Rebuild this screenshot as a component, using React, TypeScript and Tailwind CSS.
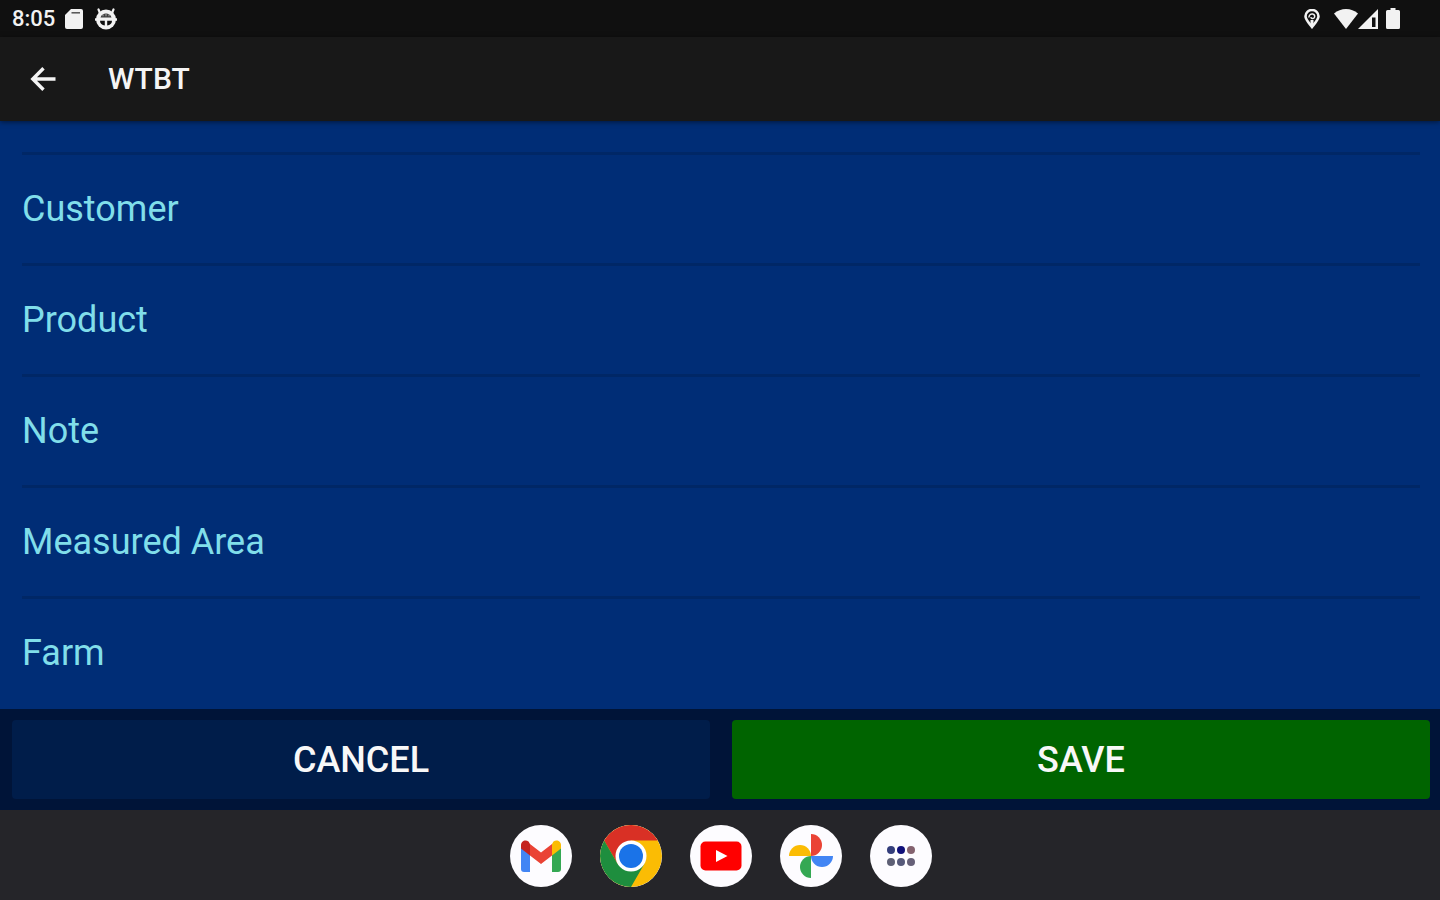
const FIELDS = ["Customer", "Product", "Note", "Measured Area", "Farm"];

function StatusBar() {
  return (
    <div className="flex h-[37px] shrink-0 items-center justify-between bg-[#101010] pr-10 pl-3 text-[#f2f2f2]">
      <div className="flex items-center gap-2.5">
        <span className="text-[22px] leading-9 font-medium">8:05</span>
        <svg viewBox="0 0 18 20" className="h-5 w-[18px]" fill="currentColor" aria-hidden="true">
          <path d="M6 0h10a2 2 0 0 1 2 2v16a2 2 0 0 1-2 2H2a2 2 0 0 1-2-2V6z" />
          <path d="M6.500 3.800h8.500" stroke="#101010" strokeWidth="1.500" opacity="0.700" />
        </svg>
        <svg viewBox="0 0 24 22" className="ml-px h-[22px] w-6" fill="currentColor" aria-hidden="true">
          <path d="M6 5 4.500 1.500M18 5l1.500-3.500" stroke="currentColor" strokeWidth="2.200" strokeLinecap="round" />
          <circle cx="12" cy="11.500" r="10" />
          <path d="M1 11.500h22" stroke="currentColor" strokeWidth="2.500" />
          <g fill="#101010">
            <path d="M6.500 9.500C7.500 6.500 9.500 5.500 12 5.500s4.500 1 5.500 4z" opacity="0.800" />
            <path d="M6 12.800h4.800v4.700C8 17.500 6 15.500 6 12.800zM13.200 12.800H18c0 2.700-2 4.700-4.800 4.700z" />
          </g>
          <path d="M9 6.500v1.800M12 6v2.300M15 6.500v1.800" stroke="currentColor" strokeWidth="1" opacity="0.600" />
        </svg>
      </div>
      <div className="flex items-center">
        <svg viewBox="0 0 16 20" className="mr-3.5 h-5 w-4" fill="none" stroke="currentColor" aria-hidden="true">
          <path d="M8 18C4.500 13.500 1.500 10.500 1.500 7.300a6.500 6.300 0 0 1 13 0c0 3.200-3 6.200-6.500 10.700z" strokeWidth="2.600" />
          <path d="M4.800 8.500c.4-2.800 2.200-4 4-3.500 2 .5 2.500 2.700 1.200 4-1.100 1-2.900.7-3.200-.8" strokeWidth="1.500" />
          <path d="M8 11v6" strokeWidth="3" />
        </svg>
        <svg viewBox="0 0 24 20" className="h-5 w-6" fill="currentColor" aria-hidden="true">
          <path d="M0 4.500C3.500 1.500 7.500 0 12 0s8.500 1.500 12 4.500L12 20z" />
        </svg>
        <svg viewBox="0 0 20 20" className="h-5 w-5" fill="currentColor" aria-hidden="true">
          <path d="M20 0v20H0zM14 8.500V18h3.500V8.500z" fillRule="evenodd" />
        </svg>
        <svg viewBox="0 0 14 21" className="ml-2 h-[21px] w-3.5" fill="currentColor" aria-hidden="true">
          <path d="M4.500 0h5v2h3A1.500 1.500 0 0 1 14 3.500v16a1.500 1.500 0 0 1-1.500 1.500h-11A1.500 1.500 0 0 1 0 19.500v-16A1.500 1.500 0 0 1 1.500 2h3z" />
        </svg>
      </div>
    </div>
  );
}

function AppBar() {
  return (
    <header className="z-10 flex h-[84px] shrink-0 items-center gap-[50px] bg-[#181818] pl-7 text-[#f4f4f4] shadow-[0_1px_5px_rgba(0,0,0,0.5)]">
      <button type="button" aria-label="Back" className="flex h-12 w-[30px] items-center justify-center">
        <svg viewBox="0 0 26 24" className="h-6 w-[26px]" fill="none" stroke="currentColor" strokeWidth="3.400" aria-hidden="true">
          <path d="M13.500 1.300 2.800 12l10.700 10.700M2.800 12H25.500" />
        </svg>
      </button>
      <h1 className="text-[30px] leading-10 font-medium">WTBT</h1>
    </header>
  );
}

function FieldList() {
  return (
    <main className="min-h-0 flex-1 overflow-hidden bg-[#002d76] pt-[31px] pr-5 pl-[22px]">
      <ul>
        {FIELDS.map((field) => (
          <li key={field} className="border-t-3 border-[#002766]">
            <button type="button" className="flex h-[108px] w-full items-center text-left text-4xl text-[#80deea]">
              {field}
            </button>
          </li>
        ))}
      </ul>
    </main>
  );
}

function Actions() {
  return (
    <div className="flex shrink-0 gap-[22px] bg-[#001438] py-[11px] pr-2.5 pl-3 text-4xl font-medium text-[#f8f8f8]">
      <button type="button" className="h-[79px] flex-1 rounded bg-[#001d4a]">
        CANCEL
      </button>
      <button type="button" className="h-[79px] flex-1 rounded bg-[#006400]">
        SAVE
      </button>
    </div>
  );
}

function Gmail() {
  return (
    <svg viewBox="0 0 62 62" className="size-full" aria-hidden="true">
      <path d="M11 20v24a3 3 0 0 0 3 3h6V27z" fill="#4285f4" />
      <path d="M42 27v20h6a3 3 0 0 0 3-3V20z" fill="#34a853" />
      <path d="M42 19v11.500l9-7V20c0-4-4.500-6-7.500-3.500z" fill="#fbbc04" />
      <path d="M20 30.500V19l11 8.500L42 19v11.500L31 39z" fill="#ea4335" />
      <path d="M11 20v3.500l9 7V19l-1.500-2.500C15.500 14 11 16 11 20z" fill="#c5221f" />
    </svg>
  );
}

function Chrome() {
  return (
    <svg viewBox="0 0 62 62" className="size-full" aria-hidden="true">
      <circle cx="31" cy="31" r="31" fill="#fbbc04" />
      <path d="M31 15.500h26.850A31 31 0 0 0 4.150 15.500l13.430 23.250z" fill="#d93025" />
      <path d="M31 62 44.420 38.750 31 31 17.580 38.750 4.150 15.500A31 31 0 0 0 31 62z" fill="#1e8e3e" />
      <circle cx="31" cy="31" r="15.500" fill="#fff" />
      <circle cx="31" cy="31" r="12" fill="#1a73e8" />
    </svg>
  );
}

function YouTube() {
  return (
    <svg viewBox="0 0 62 62" className="size-full" aria-hidden="true">
      <rect x="10.500" y="16.500" width="41" height="29" rx="5" fill="#f00" />
      <path d="M26 25v12l11.500-6z" fill="#fff" />
    </svg>
  );
}

function Photos() {
  return (
    <svg viewBox="0 0 62 62" className="size-full" aria-hidden="true">
      <path d="M31 31V9a11 11 0 0 1 0 22z" fill="#ea4335" />
      <path d="M31 31h22a11 11 0 0 1-22 0z" fill="#4285f4" />
      <path d="M31 31v22a11 11 0 0 1 0-22z" fill="#34a853" />
      <path d="M31 31H9a11 11 0 0 1 22 0z" fill="#fbbc04" />
    </svg>
  );
}

function AllApps() {
  return (
    <svg viewBox="0 0 62 62" className="size-full" aria-hidden="true">
      <circle cx="21" cy="25" r="4" fill="#343e7c" />
      <circle cx="31" cy="25" r="4" fill="#10107a" />
      <circle cx="41" cy="25" r="4" fill="#84626f" />
      <circle cx="21" cy="37" r="4" fill="#5d5f75" />
      <circle cx="31" cy="37" r="4" fill="#56597a" />
      <circle cx="41" cy="37" r="4" fill="#666078" />
    </svg>
  );
}

const DOCK = [
  { name: "Gmail", Icon: Gmail },
  { name: "Chrome", Icon: Chrome },
  { name: "YouTube", Icon: YouTube },
  { name: "Photos", Icon: Photos },
  { name: "All apps", Icon: AllApps },
];

function Dock() {
  return (
    <nav className="flex h-[90px] shrink-0 items-center justify-center gap-7 bg-[#252529] pt-px pl-px">
      {DOCK.map(({ name, Icon }) => (
        <button
          key={name}
          type="button"
          aria-label={name}
          className="size-[62px] overflow-hidden rounded-full bg-[#fdfcff]"
        >
          <Icon />
        </button>
      ))}
    </nav>
  );
}

export default function App() {
  return (
    <div className="flex h-screen flex-col font-[Roboto,sans-serif]">
      <StatusBar />
      <AppBar />
      <FieldList />
      <Actions />
      <Dock />
    </div>
  );
}
